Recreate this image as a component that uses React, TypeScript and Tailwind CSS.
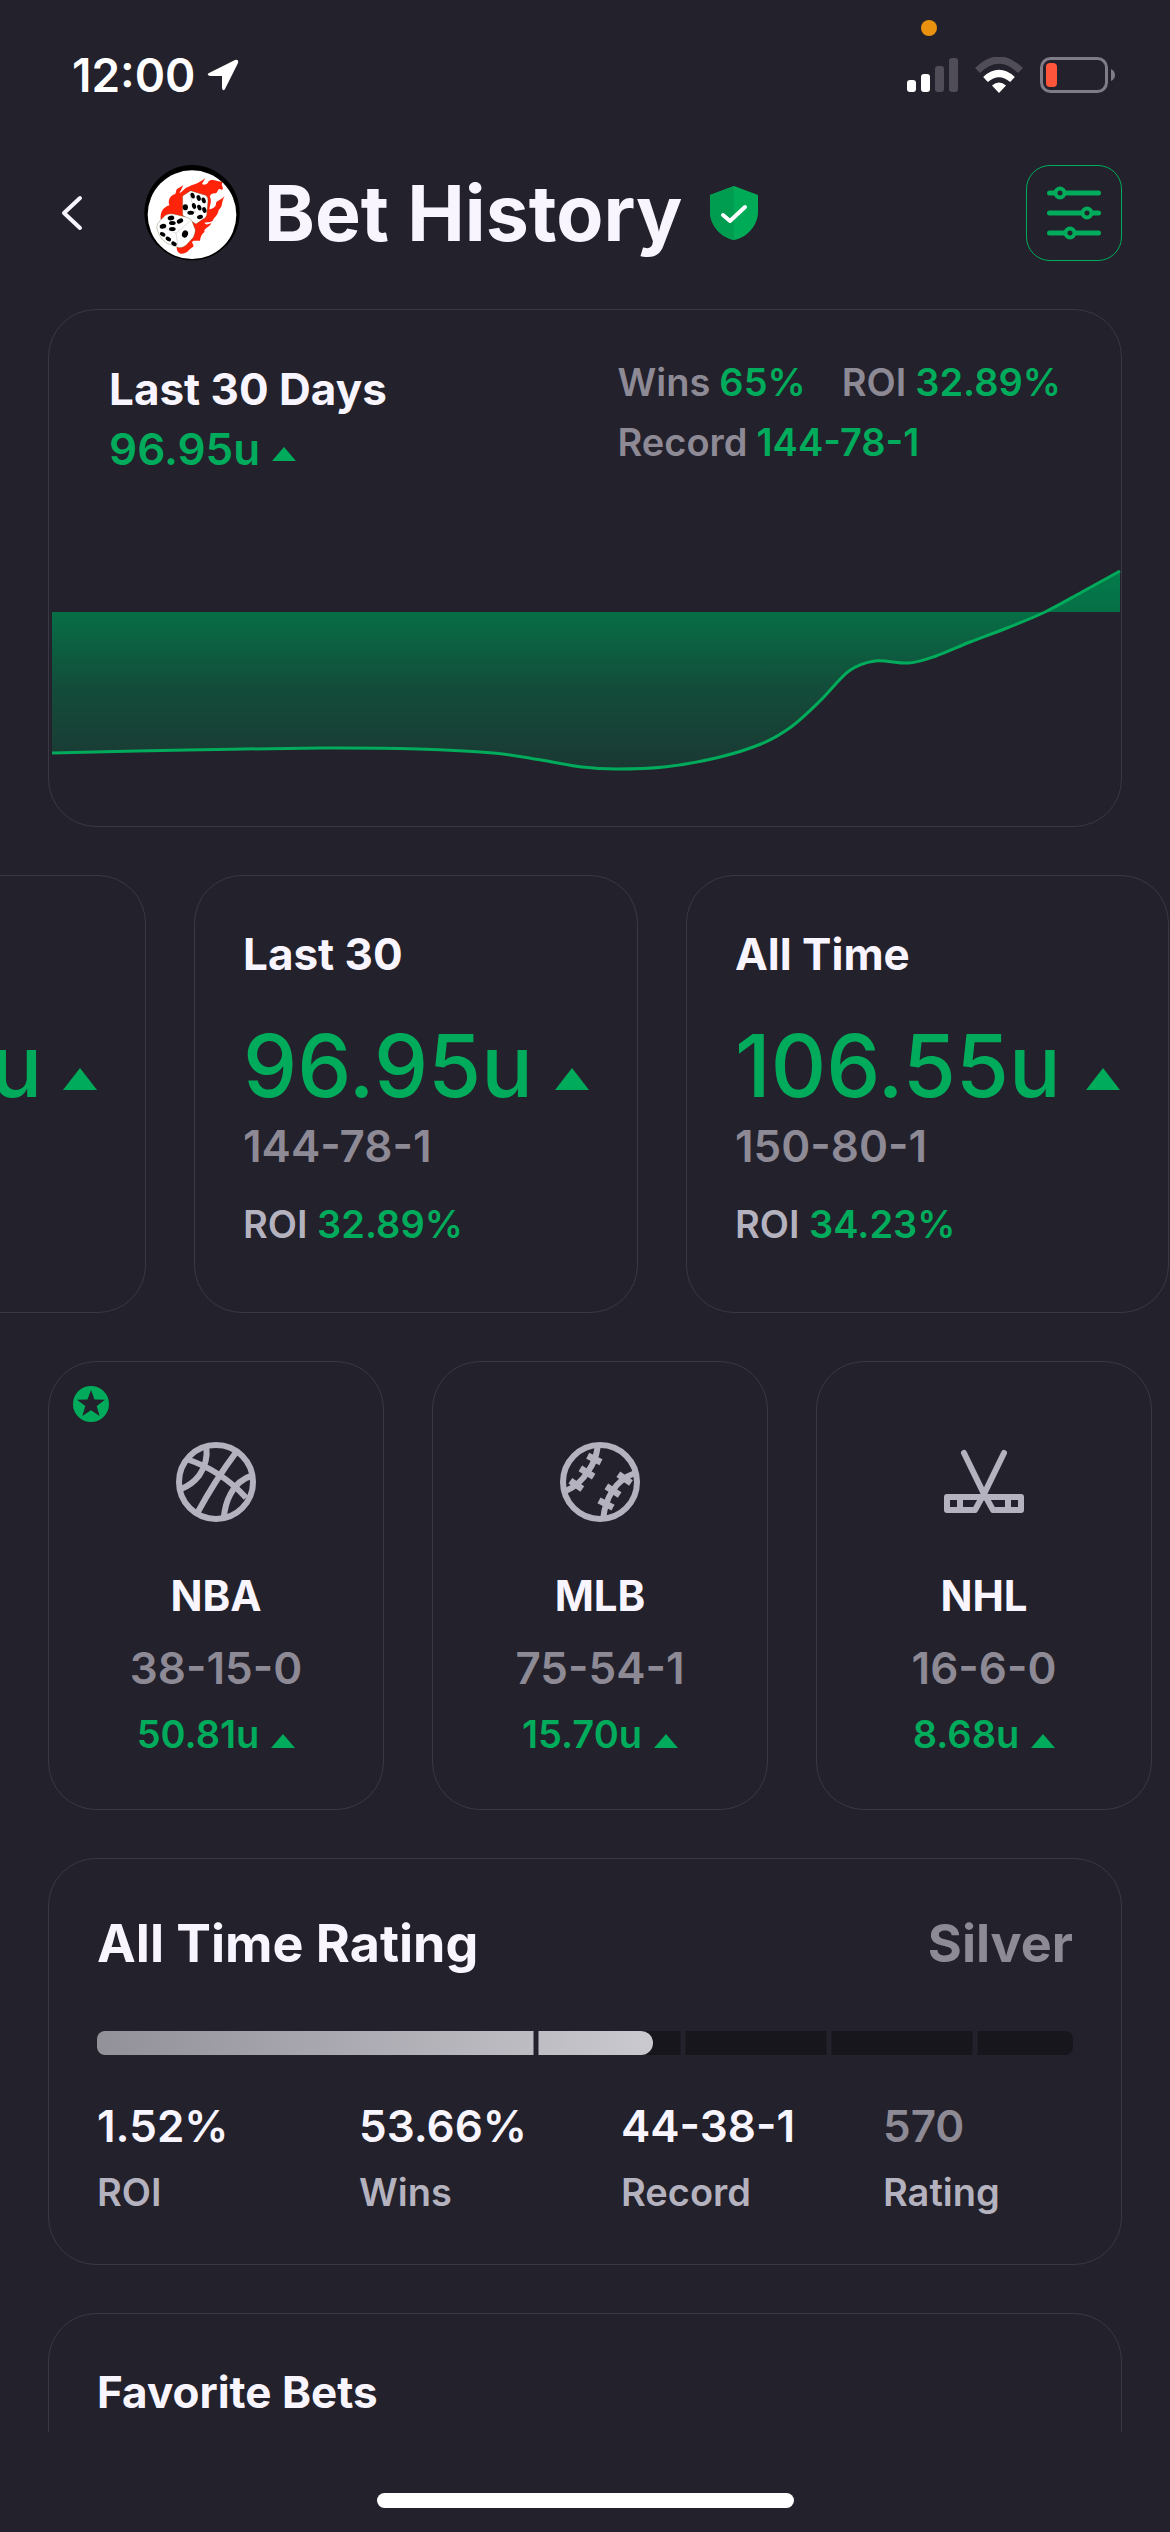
import React from 'react'

type Period = {
  title: string
  units: string
  record: string
  roi: string
  wide?: boolean
}

type League = {
  name: string
  record: string
  units: string
  icon: React.ReactNode
  favorite?: boolean
}

const periods: Period[] = [
  { title: 'Last 7', units: '26.90u', record: '31-19-0', roi: '28.14%' },
  { title: 'Last 30', units: '96.95u', record: '144-78-1', roi: '32.89%' },
  { title: 'All Time', units: '106.55u', record: '150-80-1', roi: '34.23%', wide: true }
]

const ratingStats = [
  { value: '1.52%', label: 'ROI' },
  { value: '53.66%', label: 'Wins' },
  { value: '44-38-1', label: 'Record' },
  { value: '570', label: 'Rating', muted: true }
]

const chartPoints: [number, number][] = [
  [3, 274],
  [138, 271],
  [272, 269],
  [369, 270],
  [444, 274],
  [492, 281],
  [533, 288],
  [567, 290],
  [615, 288],
  [667, 279],
  [712, 265],
  [742, 248],
  [772, 221],
  [800, 192],
  [826, 182],
  [860, 184],
  [887, 177],
  [921, 163],
  [958, 149],
  [996, 133],
  [1033, 113],
  [1071, 92]
]

const CHART_BASELINE = 133

// Catmull-Rom through the points, emitted as cubic segments
function smoothPath(pts: [number, number][]): string {
  let d = `M${pts[0][0]} ${pts[0][1]}`
  for (let i = 0; i < pts.length - 1; i++) {
    const p0 = pts[i - 1] ?? pts[i]
    const p1 = pts[i]
    const p2 = pts[i + 1]
    const p3 = pts[i + 2] ?? p2
    d += ` C${p1[0] + (p2[0] - p0[0]) / 6} ${p1[1] + (p2[1] - p0[1]) / 6}`
    d += ` ${p2[0] - (p3[0] - p1[0]) / 6} ${p2[1] - (p3[1] - p1[1]) / 6}`
    d += ` ${p2[0]} ${p2[1]}`
  }
  return d
}

const UpTriangle = ({ className }: { className: string }) => (
  <svg viewBox="0 0 24 14" preserveAspectRatio="none" className={className} aria-hidden="true">
    <path d="M12 0L24 14H0Z" fill="#00ab5b" />
  </svg>
)

const BasketballIcon = () => (
  <svg viewBox="33 51 240 240" className="h-20 w-20" fill="none" stroke="#b5b2bf" strokeWidth="18">
    <circle cx="153" cy="171" r="111" />
    <path d="M64 102Q168 136 243 218" />
    <path d="M213 82Q150 166 97 264" />
    <path d="M124 66Q130 112 102 152Q82 178 50 191" />
    <path d="M266 150Q218 164 196 208Q180 238 176 280" />
  </svg>
)

const BaseballIcon = () => (
  <svg viewBox="45 51 240 240" className="h-20 w-20" fill="none" stroke="#b5b2bf" strokeWidth="18">
    <circle cx="165" cy="171" r="111" />
    <path d="M158 66Q152 108 130 138Q104 180 62 198" />
    <path d="M270 144Q226 160 202 198Q180 232 175 278" />
    <g strokeWidth="20">
      <path d="M128 92L168 112" />
      <path d="M106 130L146 155" />
      <path d="M76 167L112 192" />
      <path d="M220 148L258 174" />
      <path d="M184 184L224 210" />
      <path d="M162 226L204 248" />
    </g>
  </svg>
)

const HockeyIcon = () => (
  <svg
    viewBox="0 0 80 80"
    className="h-20 w-20"
    fill="none"
    stroke="#b5b2bf"
    strokeWidth="6"
    strokeLinecap="round"
    strokeLinejoin="round"
  >
    <path d="M20 11L39 50L49 68H77V55H42" />
    <path d="M60 11L41 50L31 68H3V55H38" />
    <path d="M16 56V67M64 56V67" />
  </svg>
)

const leagues: League[] = [
  { name: 'NBA', record: '38-15-0', units: '50.81u', icon: <BasketballIcon />, favorite: true },
  { name: 'MLB', record: '75-54-1', units: '15.70u', icon: <BaseballIcon /> },
  { name: 'NHL', record: '16-6-0', units: '8.68u', icon: <HockeyIcon /> }
]

const StatusBar = () => (
  <div className="relative flex h-[150px] shrink-0 items-center justify-between pr-[55px] pl-[72px]">
    <span className="absolute top-5 right-[233px] h-4 w-4 rounded-full bg-[#e8920f]" />
    <div className="flex items-center gap-3">
      <span className="text-[46px] leading-[60px] font-semibold text-white">12:00</span>
      <svg viewBox="0 0 32 32" className="h-8 w-8" aria-hidden="true">
        <path
          d="M2 14L28 1Q32 0 31 4L18 30Q16 33 15 29V17H3Q-1 16 2 14Z"
          fill="#fff"
        />
      </svg>
    </div>
    <div className="flex items-center gap-[17px]">
      <svg viewBox="0 0 51 34" className="h-[34px] w-[51px]" aria-hidden="true">
        <rect x="0" y="22" width="9" height="12" rx="3" fill="#fff" />
        <rect x="14" y="16" width="9" height="18" rx="3" fill="#fff" />
        <rect x="28" y="8" width="9" height="26" rx="3" fill="#504d58" />
        <rect x="42" y="0" width="9" height="34" rx="3" fill="#504d58" />
      </svg>
      <svg viewBox="0 0 48 36" className="h-9 w-12" fill="none" aria-hidden="true">
        <path d="M2.500 13.500Q24 -7.500 45.500 13.500" stroke="#504d58" strokeWidth="7" />
        <path d="M10.500 22.500Q24 10.500 37.500 22.500" stroke="#fff" strokeWidth="7" />
        <path d="M24 36L17 28.500Q24 22.500 31 28.500Z" fill="#fff" />
      </svg>
      <svg viewBox="0 0 75 36" className="h-9 w-[75px]" aria-hidden="true">
        <rect x="1.500" y="1.500" width="65" height="33" rx="9" fill="none" stroke="#7f7c88" strokeWidth="3" />
        <rect x="6" y="6" width="11" height="24" rx="4" fill="#ff553a" />
        <path d="M71 12Q75 14 75 18T71 24Z" fill="#7f7c88" />
      </svg>
    </div>
  </div>
)

const Avatar = () => (
  <svg viewBox="42 45 288 288" className="h-24 w-24 shrink-0" role="img" aria-label="Profile">
    <circle cx="186" cy="188" r="143" fill="#000" />
    <circle cx="186" cy="194" r="133" fill="#fff" />
    <path
      d="M92 208C90 185 100 172 118 166C112 150 122 135 136 132L140 118L160 106L148 130C160 124 162 116 172 112C185 104 205 102 226 84L216 102C225 106 232 104 236 94C245 84 262 94 278 96C270 106 284 112 276 120C262 112 266 124 258 130C244 130 240 134 240 142C246 152 240 165 238 178C250 176 260 168 258 158C264 150 274 150 284 138C272 160 280 168 266 180C264 196 254 200 248 212C238 220 222 214 224 220C228 226 234 222 244 220C238 232 218 238 224 246C214 252 212 262 210 272C198 274 188 268 186 278C192 284 190 290 190 290C178 294 174 312 152 311C142 308 140 300 140 288Z"
      fill="#ff230a"
    />
    <path
      d="M158 138L182 122L226 136Q234 140 234 152L230 196Q228 204 218 208L198 222L158 196Z"
      fill="#fff"
      stroke="#552"
      strokeWidth="1"
    />
    <path
      d="M80 232Q80 222 90 212L106 196Q114 190 130 192L170 202Q182 204 186 214L196 240Q196 250 190 262L168 286Q156 296 142 292L112 280Q96 272 88 256Z"
      fill="#fff"
      stroke="#552"
      strokeWidth="1"
    />
    <path d="M88 226L138 250L182 212M138 250L144 290M162 182L196 188L178 130" fill="none" stroke="#998" strokeWidth="1" />
    <g fill="#000">
      <ellipse cx="188" cy="137" rx="6" ry="9" transform="rotate(-20 188 137)" />
      <ellipse cx="206" cy="144" rx="6" ry="9" transform="rotate(-20 206 144)" />
      <ellipse cx="221" cy="151" rx="6" ry="9" transform="rotate(-20 221 151)" />
      <ellipse cx="192" cy="168" rx="6" ry="9" transform="rotate(-20 192 168)" />
      <ellipse cx="208" cy="173" rx="6" ry="9" transform="rotate(-20 208 173)" />
      <ellipse cx="223" cy="180" rx="6" ry="9" transform="rotate(-20 223 180)" />
      <ellipse cx="166" cy="172" rx="8" ry="9" />
      <ellipse cx="182" cy="188" rx="10" ry="6" />
      <ellipse cx="210" cy="201" rx="9" ry="6" transform="rotate(-15 210 201)" />
      <ellipse cx="123" cy="204" rx="10" ry="7" transform="rotate(-10 123 204)" />
      <ellipse cx="150" cy="213" rx="10" ry="7" transform="rotate(-25 150 213)" />
      <ellipse cx="127" cy="219" rx="10" ry="6" />
      <ellipse cx="99" cy="229" rx="10" ry="7" transform="rotate(-15 99 229)" />
      <ellipse cx="127" cy="237" rx="10" ry="6" />
      <ellipse cx="165" cy="252" rx="9" ry="11" transform="rotate(20 165 252)" />
      <ellipse cx="98" cy="253" rx="9" ry="6" transform="rotate(30 98 253)" />
      <ellipse cx="115" cy="267" rx="9" ry="6" transform="rotate(30 115 267)" />
      <ellipse cx="132" cy="281" rx="9" ry="6" transform="rotate(30 132 281)" />
    </g>
  </svg>
)

const Header = () => (
  <header className="mt-[15px] flex h-24 shrink-0 items-center pr-12 pl-[60px]">
    <button type="button" aria-label="Back" className="mr-[60px] flex h-12 w-6 shrink-0 items-center">
      <svg viewBox="0 0 24 38" className="h-[38px] w-6" fill="none" aria-hidden="true">
        <path
          d="M20 4L4 19L20 34"
          stroke="#f8f5ff"
          strokeWidth="4"
          strokeLinecap="round"
          strokeLinejoin="round"
        />
      </svg>
    </button>
    <Avatar />
    <h1 className="ml-6 text-[77px] leading-[92px] font-bold whitespace-nowrap">Bet History</h1>
    <svg viewBox="0 0 48 54" className="ml-7 h-[54px] w-12 shrink-0" role="img" aria-label="Verified">
      <path d="M24 0L48 9V26C48 40 36 52 24 54C12 52 0 40 0 26V9Z" fill="#00ab58" />
      <path d="M24 0V54C12 52 0 40 0 26V9Z" fill="#009c50" />
      <path
        d="M13 29L20 35L35 21"
        fill="none"
        stroke="#fff"
        strokeWidth="4"
        strokeLinecap="round"
        strokeLinejoin="round"
      />
    </svg>
    <button
      type="button"
      aria-label="Filters"
      className="ml-auto flex h-24 w-24 shrink-0 items-center justify-center rounded-3xl border border-[#00ab5b]"
    >
      <svg viewBox="0 0 54 56" className="h-14 w-[54px]" stroke="#00ab5b" strokeWidth="5" aria-hidden="true">
        <path d="M2.500 8H51.500M2.500 28H51.500M2.500 48H51.500" strokeLinecap="round" />
        <circle cx="13" cy="8" r="4.500" fill="#23212b" strokeWidth="4" />
        <circle cx="40" cy="28" r="4.500" fill="#23212b" strokeWidth="4" />
        <circle cx="23" cy="48" r="4.500" fill="#23212b" strokeWidth="4" />
      </svg>
    </button>
  </header>
)

const SummaryCard = () => {
  const line = smoothPath(chartPoints)
  return (
    <section className="mx-12 shrink-0 rounded-[48px] border border-[#3a3843]">
      <div className="flex justify-between px-[60px]">
        <div className="pt-[49px]">
          <h2 className="text-[44px] leading-[60px] font-bold">Last 30 Days</h2>
          <p className="flex items-end gap-3 text-[44px] leading-[60px] font-semibold text-[#00ab5b]">
            96.95u
            <UpTriangle className="mb-[18px] h-[14px] w-6" />
          </p>
        </div>
        <dl className="pt-[42px] text-[38px] leading-[60px] font-semibold">
          <div className="flex gap-9">
            <div className="flex gap-[9px]">
              <dt className="text-[#8d8a96]">Wins</dt>
              <dd className="text-[#00ab5b]">65%</dd>
            </div>
            <div className="flex gap-[9px]">
              <dt className="text-[#8d8a96]">ROI</dt>
              <dd className="text-[#00ab5b]">32.89%</dd>
            </div>
          </div>
          <div className="flex gap-[9px]">
            <dt className="text-[#8d8a96]">Record</dt>
            <dd className="text-[#00ab5b]">144-78-1</dd>
          </div>
        </dl>
      </div>
      <svg
        viewBox="0 0 1072 347"
        preserveAspectRatio="none"
        className="block h-[347px] w-full"
        role="img"
        aria-label="Units over the last 30 days"
      >
        <defs>
          <linearGradient id="area" gradientUnits="userSpaceOnUse" x1="0" y1="92" x2="0" y2="290">
            <stop offset="0" stopColor="#00804c" stopOpacity="0.95" />
            <stop offset="0.2" stopColor="#00804c" stopOpacity="0.82" />
            <stop offset="0.6" stopColor="#00804c" stopOpacity="0.45" />
            <stop offset="1" stopColor="#00804c" stopOpacity="0.25" />
          </linearGradient>
        </defs>
        <path d={`${line} V${CHART_BASELINE} H3 Z`} fill="url(#area)" />
        <path d={line} fill="none" stroke="#00ab5b" strokeWidth="3" />
      </svg>
    </section>
  )
}

const PeriodCard = ({ period }: { period: Period }) => (
  <article
    className={
      period.wide
        ? 'w-[483px] shrink-0 rounded-[48px] border border-[#3a3843] px-12 pt-12 pb-16'
        : 'w-[444px] shrink-0 rounded-[48px] border border-[#3a3843] px-12 pt-12 pb-16'
    }
  >
    <h2 className="text-[44px] leading-[60px] font-bold">{period.title}</h2>
    <p className="mt-8 flex items-end justify-between text-[86px] leading-[100px] font-medium text-[#00ab5b]">
      {period.units}
      <UpTriangle className="mb-[26px] h-[22px] w-[34px]" />
    </p>
    <p className="text-[44px] leading-[60px] font-semibold text-[#8d8a96]">{period.record}</p>
    <p className="mt-6 text-[38px] leading-[48px] font-semibold text-[#b5b2bf]">
      ROI <span className="text-[#00ab5b]">{period.roi}</span>
    </p>
  </article>
)

const LeagueCard = ({ league }: { league: League }) => (
  <article className="relative flex w-[336px] shrink-0 flex-col items-center rounded-[48px] border border-[#3a3843] pt-20 pb-[51px]">
    {league.favorite ? (
      <svg viewBox="-18 -18 36 36" className="absolute top-6 left-6 h-9 w-9" role="img" aria-label="Favorite">
        <circle r="18" fill="#00ab5b" />
        <path
          d="M0 -14L3.500 -4.500L14 -4.300L5.700 2L8.600 12L0 6.200L-8.600 12L-5.700 2L-14 -4.300L-3.500 -4.500Z"
          fill="#23212b"
        />
      </svg>
    ) : null}
    {league.icon}
    <h3 className="mt-11 text-[42px] leading-[60px] font-bold">{league.name}</h3>
    <p className="mt-3 text-[44px] leading-[60px] font-semibold text-[#8d8a96]">{league.record}</p>
    <p className="mt-3 flex items-end gap-3 text-[38px] leading-[48px] font-semibold text-[#00ab5b]">
      {league.units}
      <UpTriangle className="mb-[10px] h-[14px] w-6" />
    </p>
  </article>
)

const RatingCard = () => (
  <section className="mx-12 shrink-0 rounded-[48px] border border-[#3a3843] px-12 pt-[55px] pb-12">
    <div className="flex justify-between text-[52px] leading-[60px] font-bold">
      <h2>All Time Rating</h2>
      <span className="text-[#8d8a96]">Silver</span>
    </div>
    <div
      className="relative mt-[57px] h-6 overflow-hidden rounded-lg bg-[#18161d]"
      role="meter"
      aria-label="Rating"
      aria-valuemin={0}
      aria-valuemax={1000}
      aria-valuenow={570}
    >
      <div className="h-full w-[57%] rounded-r-xl bg-linear-to-r from-[#929098] to-[#cbc9d0]" />
      {/* tier boundaries */}
      <span className="absolute inset-y-0 left-[45%] w-[5px] -translate-x-1/2 bg-[#23212b]" />
      <span className="absolute inset-y-0 left-[60%] w-[5px] -translate-x-1/2 bg-[#23212b]" />
      <span className="absolute inset-y-0 left-[75%] w-[5px] -translate-x-1/2 bg-[#23212b]" />
      <span className="absolute inset-y-0 left-[90%] w-[5px] -translate-x-1/2 bg-[#23212b]" />
    </div>
    <dl className="mt-[41px] grid grid-cols-4 gap-[72px]">
      {ratingStats.map((stat) => (
        <div key={stat.label} className="flex flex-col-reverse gap-3 whitespace-nowrap">
          <dt className="text-[38px] leading-[48px] font-semibold text-[#b5b2bf]">{stat.label}</dt>
          <dd
            className={
              stat.muted
                ? 'text-[44px] leading-[60px] font-semibold text-[#8d8a96]'
                : 'text-[44px] leading-[60px] font-semibold'
            }
          >
            {stat.value}
          </dd>
        </div>
      ))}
    </dl>
  </section>
)

export default function App() {
  return (
    <div className="flex h-screen flex-col overflow-hidden bg-[#23212b] font-['Inter',sans-serif] text-[#f8f5ff]">
      <StatusBar />
      <Header />
      <main className="mt-12 flex min-h-0 flex-1 flex-col gap-12 overflow-hidden">
        <SummaryCard />
        <div className="flex shrink-0 justify-end gap-12 overflow-hidden pr-px">
          {periods.map((period) => (
            <PeriodCard key={period.title} period={period} />
          ))}
        </div>
        <div className="flex shrink-0 gap-12 overflow-hidden pl-12">
          {leagues.map((league) => (
            <LeagueCard key={league.name} league={league} />
          ))}
        </div>
        <RatingCard />
        <section className="mx-12 h-60 shrink-0 rounded-[48px] border border-[#3a3843] px-12 pt-12">
          <h2 className="text-[44px] leading-[60px] font-bold">Favorite Bets</h2>
        </section>
      </main>
      <div className="flex h-[100px] shrink-0 items-end justify-center pb-6">
        <span className="h-[15px] w-[417px] rounded-full bg-white" />
      </div>
    </div>
  )
}
